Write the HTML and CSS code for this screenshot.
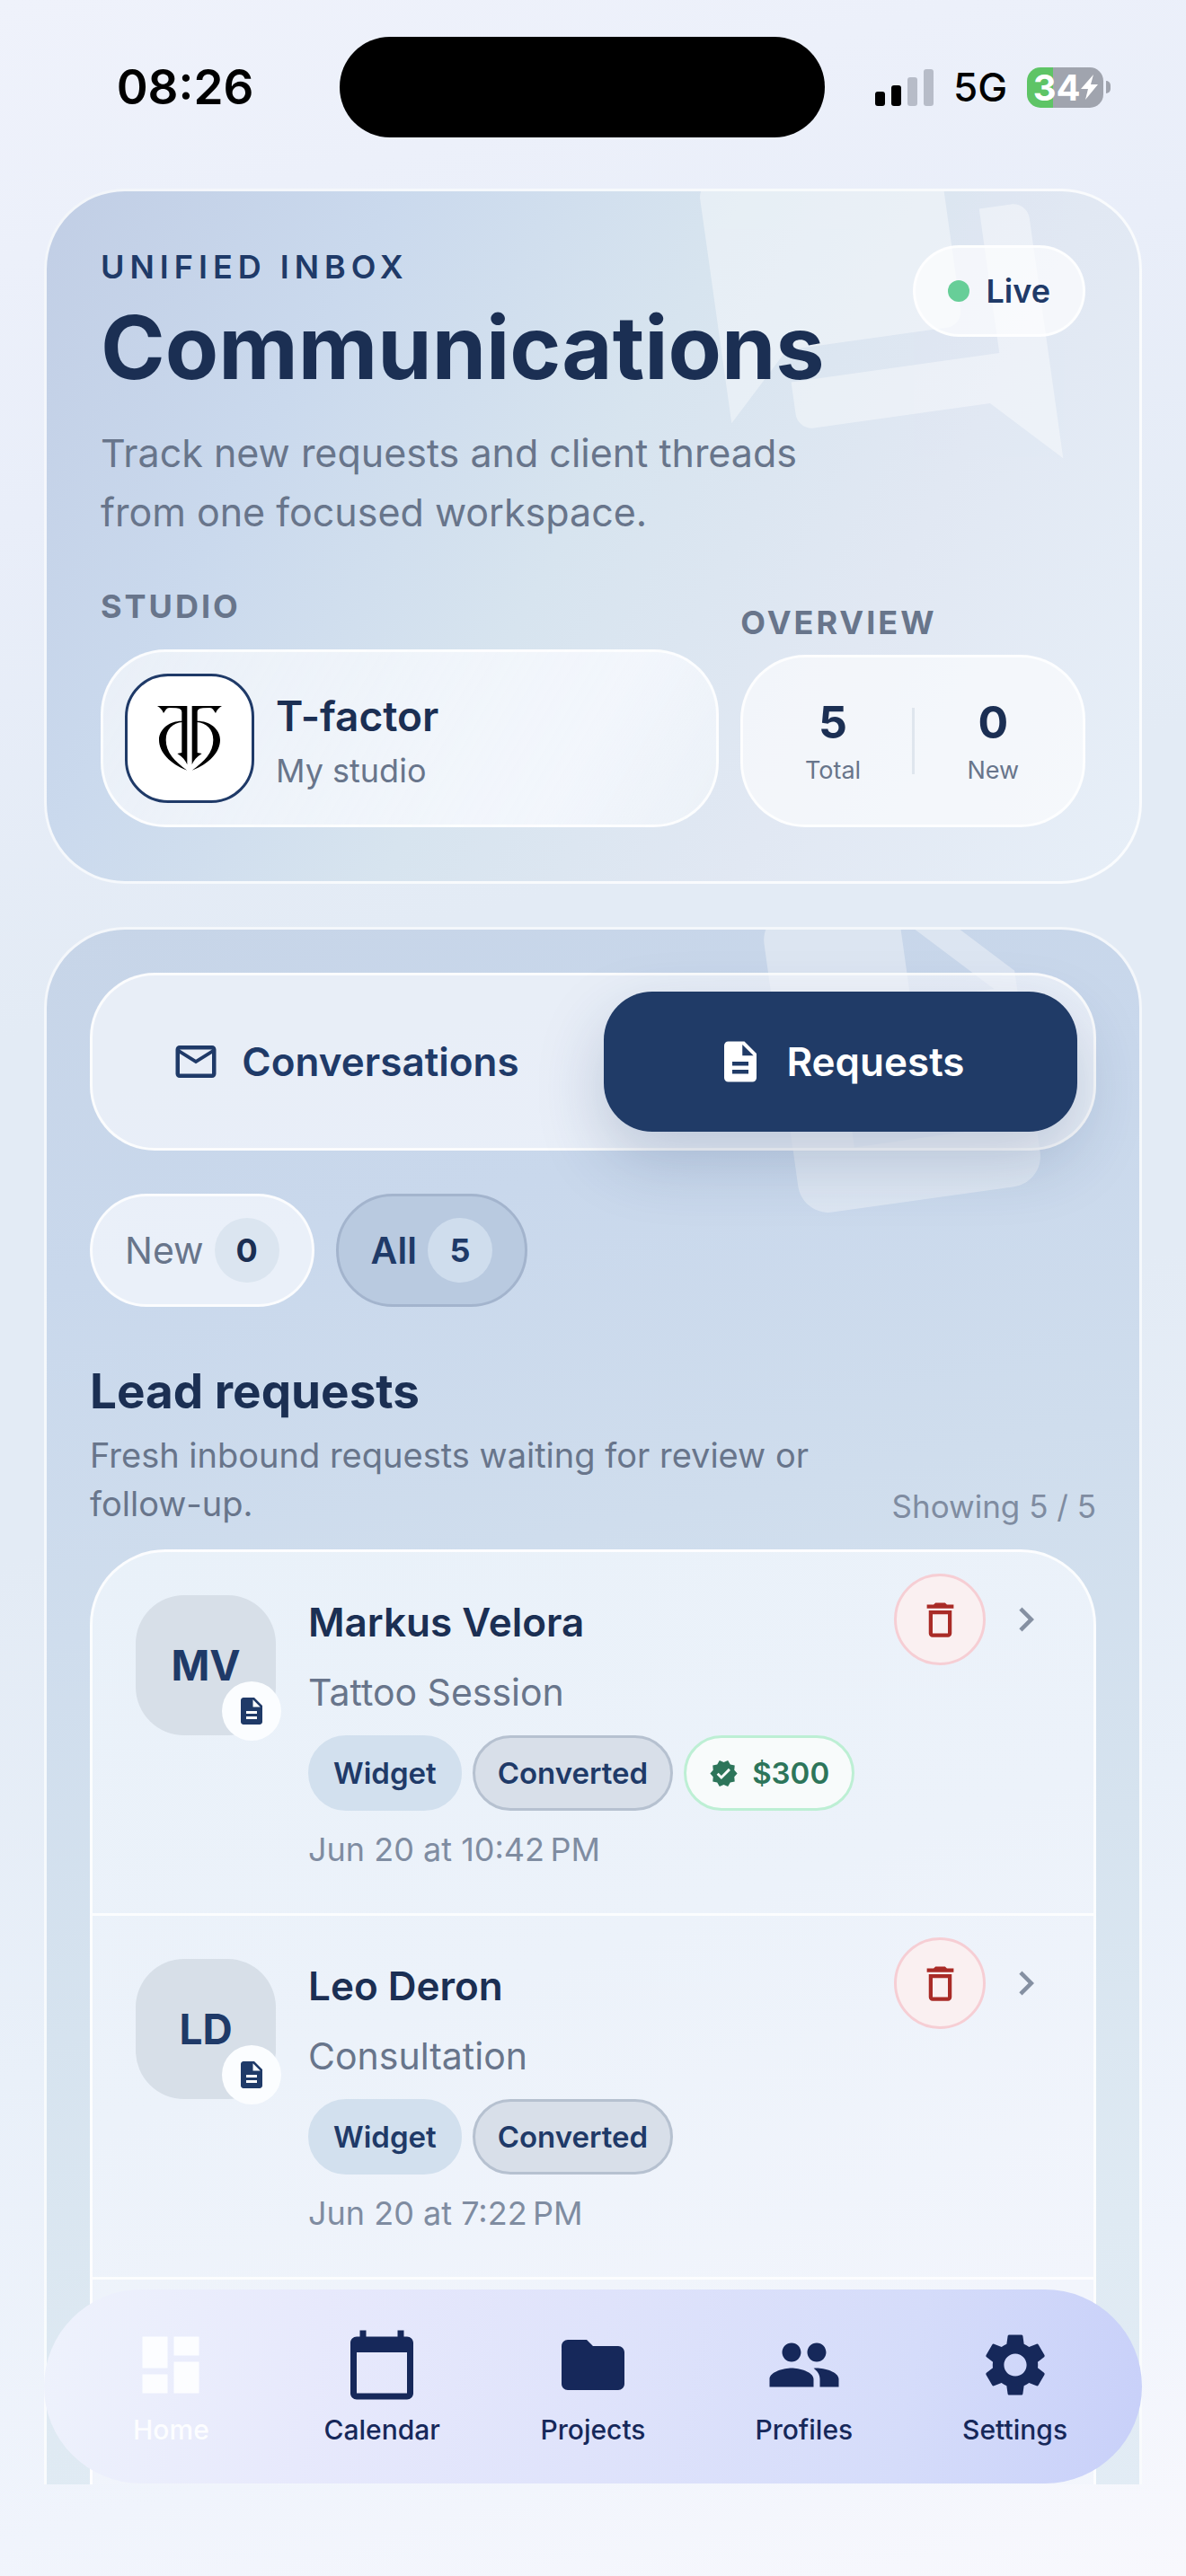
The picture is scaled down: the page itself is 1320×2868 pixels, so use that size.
FILE: index.html
```html
<!DOCTYPE html>
<html lang="en">
<head>
<meta charset="utf-8">
<meta name="viewport" content="width=device-width, initial-scale=1">
<title>Communications</title>
<link rel="stylesheet" href="styles.css">
</head>
<body>
<svg class="sprite" aria-hidden="true">
  <symbol id="doc" viewBox="0 0 24 24"><path d="M14 2H6c-1.1 0-1.99.9-1.99 2L4 20c0 1.1.89 2 1.99 2H18c1.1 0 2-.9 2-2V8l-6-6zm2 16H8v-2h8v2zm0-4H8v-2h8v2zm-3-5V3.5L18.5 9H13z"/></symbol>
  <symbol id="forum" viewBox="0 0 24 24"><path d="M21 6h-2v9H6v2c0 .55.45 1 1 1h11l4 4V7c0-.55-.45-1-1-1zm-4 6V3c0-.55-.45-1-1-1H3c-.55 0-1 .45-1 1v14l4-4h10c.55 0 1-.45 1-1z"/></symbol>
  <symbol id="mail" viewBox="0 0 24 24"><path d="M22 6c0-1.1-.9-2-2-2H4c-1.1 0-2 .9-2 2v12c0 1.1.9 2 2 2h16c1.100 0 2-.9 2-2V6zm-2 0l-8 5-8-5h16zm0 12H4V8l8 5 8-5v10z"/></symbol>
  <symbol id="trash" viewBox="0 0 24 24"><path d="M6 19c0 1.1.9 2 2 2h8c1.100 0 2-.9 2-2V7H6v12zM8 9h8v10H8V9zm7.500-5l-1-1h-5l-1 1H5v2h14V4z"/></symbol>
  <symbol id="chevron" viewBox="0 0 24 24"><path d="M10 6L8.590 7.410 13.170 12l-4.580 4.590L10 18l6-6z"/></symbol>
  <symbol id="verified" viewBox="0 0 24 24"><path d="M23 12l-2.440-2.790.34-3.690-3.610-.82-1.890-3.200L12 2.960 8.600 1.500 6.710 4.690 3.100 5.500l.34 3.700L1 12l2.440 2.790-.34 3.700 3.610.82L8.600 22.500l3.400-1.470 3.400 1.460 1.890-3.190 3.610-.82-.34-3.690L23 12zm-12.910 4.720l-3.800-3.810 1.480-1.480 2.320 2.330 5.850-5.870 1.480 1.480-7.330 7.350z"/></symbol>
</svg>

<div class="screen">
  <header class="status">
    <time class="clock">08:26</time>
    <div class="island"></div>
    <div class="signals">
      <svg class="bars" viewBox="0 0 65 41" aria-label="Signal">
        <rect x="0" y="25" width="11" height="16" rx="3"/>
        <rect x="18" y="18" width="11" height="23" rx="3"/>
        <rect class="off" x="36" y="9" width="11" height="32" rx="3"/>
        <rect class="off" x="54" y="0" width="11" height="41" rx="3"/>
      </svg>
      <span class="network">5G</span>
      <span class="battery">34<svg class="bolt" viewBox="0 0 19 30" aria-hidden="true"><path d="M14 1L0 17h8L5 29 19 12h-8z"/></svg></span>
    </div>
  </header>

  <div class="viewport">
    <main class="content">
      <section class="card hero">
        <svg class="watermark watermark-forum" aria-hidden="true"><use href="#forum"/></svg>
        <div class="hero-top">
          <div class="hero-text">
            <p class="eyebrow">UNIFIED INBOX</p>
            <h1>Communications</h1>
            <p class="lead">Track new requests and client threads from one focused workspace.</p>
          </div>
          <span class="live">Live</span>
        </div>
        <div class="hero-bottom">
          <div class="studio">
            <h2 class="label">STUDIO</h2>
            <button class="studio-card" type="button">
              <svg class="logo" viewBox="63 69 414 414" aria-hidden="true">
                <g id="half">
                  <path d="M162 168H262V364C257 350 246 338 229 327L244 324V190C244 180 238 176 225 175L202 174C193 175 190 182 183 192C178 180 172 174 162 168Z"/>
                  <path d="M246 218C206 217 168 243 168 281C168 322 204 360 262 383C220 352 191 323 191 281C191 246 214 224 246 222Z"/>
                </g>
                <use href="#half" transform="matrix(-1 0 0 1 540 0)"/>
              </svg>
              <span class="studio-text">
                <strong>T-factor</strong>
                <span>My studio</span>
              </span>
            </button>
          </div>
          <div class="overview">
            <h2 class="label">OVERVIEW</h2>
            <dl class="stats">
              <div><dt>Total</dt><dd>5</dd></div>
              <div><dt>New</dt><dd>0</dd></div>
            </dl>
          </div>
        </div>
      </section>

      <section class="card panel">
        <svg class="watermark watermark-doc" aria-hidden="true"><use href="#doc"/></svg>
        <div class="tabs">
          <button class="tab" type="button"><svg class="icon"><use href="#mail"/></svg>Conversations</button>
          <button class="tab active" type="button"><svg class="icon"><use href="#doc"/></svg>Requests</button>
        </div>
        <div class="filters">
          <button class="filter" type="button">New <span class="count">0</span></button>
          <button class="filter selected" type="button">All <span class="count">5</span></button>
        </div>
        <div class="list-head">
          <div>
            <h2>Lead requests</h2>
            <p>Fresh inbound requests waiting for review or follow-up.</p>
          </div>
          <span class="showing">Showing 5 / 5</span>
        </div>
        <ul class="list">
          <li class="row">
            <div class="avatar">MV<span class="badge"><svg><use href="#doc"/></svg></span></div>
            <div class="details">
              <h3>Markus Velora</h3>
              <p class="kind">Tattoo Session</p>
              <div class="tags">
                <span class="tag">Widget</span>
                <span class="tag converted">Converted</span>
                <span class="tag paid"><svg><use href="#verified"/></svg>$300</span>
              </div>
              <time class="when">Jun 20 at 10:42&#8239;PM</time>
            </div>
            <div class="actions">
              <button class="delete" type="button" aria-label="Delete"><svg><use href="#trash"/></svg></button>
              <svg class="chevron" aria-hidden="true"><use href="#chevron"/></svg>
            </div>
          </li>
          <li class="row">
            <div class="avatar">LD<span class="badge"><svg><use href="#doc"/></svg></span></div>
            <div class="details">
              <h3>Leo Deron</h3>
              <p class="kind">Consultation</p>
              <div class="tags">
                <span class="tag">Widget</span>
                <span class="tag converted">Converted</span>
              </div>
              <time class="when">Jun 20 at 7:22&#8239;PM</time>
            </div>
            <div class="actions">
              <button class="delete" type="button" aria-label="Delete"><svg><use href="#trash"/></svg></button>
              <svg class="chevron" aria-hidden="true"><use href="#chevron"/></svg>
            </div>
          </li>
          <li class="row placeholder"></li>
        </ul>
      </section>
    </main>

    <nav class="tabbar">
      <a class="current" href="#home"><svg viewBox="0 0 24 24"><path d="M3 13h8V3H3v10zm0 8h8v-6H3v6zm10 0h8V11h-8v10zm0-18v6h8V3h-8z"/></svg>Home</a>
      <a href="#calendar"><svg viewBox="0 0 24 24"><path d="M20 3h-1V1h-2v2H7V1H5v2H4c-1.100 0-2 .9-2 2v16c0 1.100.9 2 2 2h16c1.100 0 2-.9 2-2V5c0-1.100-.9-2-2-2zm0 18H4V8h16v13z"/></svg>Calendar</a>
      <a href="#projects"><svg viewBox="0 0 24 24"><path d="M10 4H4c-1.100 0-1.990.9-1.990 2L2 18c0 1.100.9 2 2 2h16c1.100 0 2-.9 2-2V8c0-1.100-.9-2-2-2h-8l-2-2z"/></svg>Projects</a>
      <a href="#profiles"><svg viewBox="0 0 24 24"><path d="M16 11c1.660 0 2.990-1.340 2.990-3S17.660 5 16 5s-3 1.340-3 3 1.340 3 3 3zm-8 0c1.660 0 2.990-1.340 2.990-3S9.660 5 8 5 5 6.340 5 8s1.340 3 3 3zm0 2c-2.330 0-7 1.170-7 3.500V19h14v-2.500c0-2.330-4.670-3.500-7-3.500zm8 0c-.29 0-.62.02-.97.05 1.160.84 1.970 1.970 1.970 3.450V19h6v-2.500c0-2.330-4.670-3.500-7-3.500z"/></svg>Profiles</a>
      <a href="#settings"><svg viewBox="0 0 24 24"><path d="M19.140 12.940c.04-.3.06-.61.06-.94 0-.32-.02-.64-.07-.94l2.030-1.580c.18-.14.23-.41.12-.61l-1.920-3.320c-.12-.22-.37-.29-.59-.22l-2.390.96c-.5-.38-1.030-.7-1.620-.94l-.36-2.540c-.04-.24-.24-.41-.48-.41h-3.840c-.24 0-.43.17-.47.41l-.36 2.540c-.59.24-1.130.57-1.620.94l-2.390-.96c-.22-.08-.47 0-.59.22L2.740 8.870c-.12.21-.08.47.12.61l2.030 1.580c-.05.3-.09.63-.09.94s.02.64.07.94l-2.030 1.580c-.18.14-.23.41-.12.61l1.920 3.320c.12.22.37.29.59.22l2.390-.96c.5.38 1.030.7 1.620.94l.36 2.540c.05.24.24.41.48.41h3.840c.24 0 .44-.17.47-.41l.36-2.540c.59-.24 1.130-.56 1.620-.94l2.390.96c.22.08.47 0 .59-.22l1.920-3.320c.12-.22.07-.47-.12-.61l-2.010-1.580zM12 15.600c-1.980 0-3.600-1.620-3.600-3.600s1.620-3.600 3.600-3.600 3.600 1.620 3.600 3.600-1.620 3.600-3.600 3.600z"/></svg>Settings</a>
    </nav>
  </div>
</div>
</body>
</html>
```
FILE: styles.css
```css
:root {
  --ink: #1b2f53;
  --navy: #1f3a68;
  --grey: #68758b;
  --grey-light: #7f8ca1;
  --line: rgba(255, 255, 255, 0.8);
}

* {
  box-sizing: border-box;
}

body {
  margin: 0;
  font-family: Inter, "Liberation Sans", sans-serif;
  color: var(--ink);
}

h1, h2, h3, p, ul, dl, dd {
  margin: 0;
  padding: 0;
}

button {
  font: inherit;
  color: inherit;
  cursor: pointer;
}

svg {
  display: block;
  fill: currentColor;
}

.sprite {
  display: none;
}

.screen {
  display: flex;
  flex-direction: column;
  height: 100vh;
  padding-bottom: 102px;
  background: linear-gradient(165deg, #eff2fb 0%, #e9eef9 18%, #e3ebf5 36%, #e3ebf5 54%, #e9f0f9 72%, #f0f4fc 88%, #f8f8fd 100%);
}

/* Status bar */

.status {
  display: grid;
  grid-template-columns: 1fr 540px 1fr;
  align-items: center;
  padding: 41px 24px 57px 0;
  color: #000;
}

.clock {
  padding-left: 34px;
  text-align: center;
  font-size: 53px;
  font-weight: 600;
}

.island {
  height: 112px;
  border-radius: 56px;
  background: #000;
}

.signals {
  display: flex;
  align-items: center;
  gap: 22px;
  padding-left: 56px;
}

.bars {
  width: 65px;
  height: 41px;
}

.bars .off {
  fill: #b7bcc8;
}

.network {
  font-size: 44px;
  font-weight: 500;
}

.battery {
  position: relative;
  display: flex;
  align-items: center;
  justify-content: center;
  width: 85px;
  height: 45px;
  border-radius: 15px;
  background: linear-gradient(90deg, #5ec466 34%, #a0a4ae 34%);
  color: #fff;
  font-size: 40px;
  font-weight: 700;
}

.battery::after {
  content: "";
  position: absolute;
  right: -8px;
  width: 5px;
  height: 14px;
  border-radius: 0 5px 5px 0;
  background: #a0a4ae;
}

.bolt {
  width: 19px;
  height: 30px;
}

/* Scrolling area */

.viewport {
  position: relative;
  flex: 1;
  min-height: 0;
  overflow: hidden;
}

.content {
  display: flex;
  flex-direction: column;
  gap: 48px;
  padding: 0 49px;
}

.card {
  position: relative;
  overflow: hidden;
  border: 3px solid var(--line);
  border-radius: 90px;
  background-origin: border-box;
}

.watermark {
  position: absolute;
  top: -72px;
  color: #fff;
  transform: rotate(-8deg);
}

.watermark-forum {
  right: 72px;
  width: 432px;
  height: 432px;
  opacity: 0.4;
}

.watermark-doc {
  right: 60px;
  width: 408px;
  height: 408px;
  opacity: 0.36;
}

/* Hero */

.hero {
  padding: 60px;
  background-image: linear-gradient(118deg, #c1cee5 0%, #cad9ed 24%, #d7e4ef 48%, #e1e8f3 72%, #e7eff8 100%);
}

.hero-top {
  position: relative;
  display: flex;
  align-items: flex-start;
  justify-content: space-between;
  gap: 60px;
}

.eyebrow {
  font-size: 36px;
  font-weight: 600;
  line-height: 48px;
  letter-spacing: 6px;
  color: var(--navy);
}

h1 {
  margin-top: 6px;
  font-size: 97px;
  font-weight: 700;
  line-height: 120px;
}

.lead {
  margin-top: 24px;
  font-size: 43px;
  line-height: 66px;
  color: var(--grey);
}

.live {
  display: flex;
  align-items: center;
  gap: 18px;
  height: 102px;
  padding: 0 36px;
  border: 3px solid var(--line);
  border-radius: 51px;
  background: rgba(255, 255, 255, 0.65);
  font-size: 36px;
  font-weight: 600;
  color: var(--navy);
}

.live::before {
  content: "";
  width: 24px;
  height: 24px;
  border-radius: 50%;
  background: #67ce98;
}

.hero-bottom {
  position: relative;
  display: grid;
  grid-template-columns: 689fr 384fr;
  align-items: end;
  gap: 24px;
  margin-top: 48px;
}

.studio, .overview {
  display: flex;
  flex-direction: column;
  gap: 24px;
}

.overview {
  gap: 12px;
}

.label {
  font-size: 36px;
  font-weight: 700;
  line-height: 48px;
  letter-spacing: 3px;
  color: var(--grey);
}

.studio-card {
  display: flex;
  align-items: center;
  gap: 24px;
  padding: 24px;
  border: 3px solid var(--line);
  border-radius: 72px;
  background: linear-gradient(120deg, rgba(255, 255, 255, 0.6), rgba(248, 250, 255, 0.8) 75%, rgba(244, 248, 251, 0.6));
  text-align: left;
}

.logo {
  width: 144px;
  height: 144px;
  border: 3px solid var(--navy);
  border-radius: 48px;
  background: #fff;
  fill: #000;
}

.studio-text {
  display: flex;
  flex-direction: column;
  gap: 4px;
  padding-top: 8px;
}

.studio-text strong {
  font-size: 46px;
  font-weight: 600;
  line-height: 60px;
}

.studio-text span {
  font-size: 36px;
  line-height: 54px;
  color: var(--grey);
}

.stats {
  display: flex;
  align-items: center;
  height: 192px;
  padding: 0 12px;
  border: 3px solid var(--line);
  border-radius: 72px;
  background: rgba(255, 255, 255, 0.6);
}

.stats div {
  display: flex;
  flex: 1;
  flex-direction: column-reverse;
  justify-content: center;
  gap: 6px;
  height: 74px;
  text-align: center;
}

.stats div + div {
  border-left: 3px solid #dfe6ee;
}

.stats dd {
  font-size: 50px;
  font-weight: 700;
  line-height: 60px;
}

.stats dt {
  font-size: 27px;
  line-height: 36px;
  color: var(--grey);
}

/* Requests panel */

.panel {
  padding: 48px;
  background-image: linear-gradient(168deg, #c7d5e8 0%, #c9d8ec 18%, #cfdded 36%, #d6e3ef 56%, #dfeaf3 76%, #e4edf6 100%);
}

.tabs {
  position: relative;
  display: grid;
  grid-template-columns: 1fr 1fr;
  gap: 24px;
  padding: 18px;
  border: 3px solid var(--line);
  border-radius: 72px;
  background: rgba(247, 249, 253, 0.68);
}

.tab {
  display: flex;
  align-items: center;
  justify-content: center;
  gap: 24px;
  height: 156px;
  border: 0;
  border-radius: 54px;
  background: none;
  font-size: 44px;
  font-weight: 600;
  color: var(--navy);
}

.tab.active {
  background: #203b67;
  box-shadow: 0 30px 75px rgba(31, 58, 104, 0.22);
  color: #fff;
}

.icon {
  width: 54px;
  height: 54px;
}

.filters {
  position: relative;
  display: flex;
  gap: 24px;
  margin-top: 48px;
}

.filter {
  display: flex;
  align-items: center;
  gap: 12px;
  height: 126px;
  padding: 0 36px;
  border: 3px solid var(--line);
  border-radius: 63px;
  background: rgba(249, 251, 255, 0.68);
  font-size: 41px;
  color: var(--grey);
}

.filter.selected {
  border-color: #a3b4cd;
  background: #b9cae0;
  font-weight: 600;
  color: var(--navy);
}

.count {
  width: 72px;
  border-radius: 50%;
  background: #dbe5f0;
  font-size: 36px;
  font-weight: 700;
  line-height: 72px;
  text-align: center;
  color: var(--ink);
}

.selected .count {
  background: #cfdded;
  color: var(--navy);
}

.list-head {
  display: flex;
  align-items: flex-end;
  justify-content: space-between;
  gap: 24px;
  margin-top: 60px;
}

.list-head h2 {
  font-size: 53px;
  font-weight: 700;
  line-height: 68px;
}

.list-head p {
  margin-top: 10px;
  font-size: 38px;
  line-height: 54px;
  color: var(--grey);
}

.showing {
  flex: none;
  font-size: 35px;
  line-height: 48px;
  color: var(--grey-light);
}

.list {
  margin-top: 24px;
  border: 3px solid var(--line);
  border-radius: 84px;
  background: linear-gradient(160deg, #e9f1f9 0%, #ecf2fa 40%, #f2f5fc 75%, #f3f6fc 100%);
  list-style: none;
}

.row {
  display: flex;
  align-items: flex-start;
  padding: 24px 48px 48px;
}

.row + .row {
  border-top: 3px solid var(--line);
}

.placeholder {
  height: 402px;
}

.avatar {
  position: relative;
  flex: none;
  width: 156px;
  height: 156px;
  margin-top: 24px;
  border-radius: 54px;
  background: #d7dfe8;
  font-size: 46px;
  font-weight: 700;
  line-height: 156px;
  text-align: center;
  color: var(--navy);
}

.badge {
  position: absolute;
  right: -6px;
  bottom: -6px;
  display: grid;
  place-items: center;
  width: 66px;
  height: 66px;
  border-radius: 50%;
  background: #fbfdff;
}

.badge svg {
  width: 36px;
  height: 36px;
}

.details {
  display: flex;
  flex: 1;
  flex-direction: column;
  gap: 21px;
  padding: 24px 0 0 36px;
}

h3 {
  font-size: 44px;
  font-weight: 600;
  line-height: 60px;
}

.kind {
  font-size: 41px;
  line-height: 54px;
  color: var(--grey);
}

.tags {
  display: flex;
  gap: 12px;
}

.tag {
  display: flex;
  align-items: center;
  gap: 15px;
  height: 84px;
  padding: 0 25px;
  border: 3px solid #d2e0ee;
  border-radius: 42px;
  background: #d2e0ee;
  font-size: 33px;
  font-weight: 600;
  color: var(--navy);
}

.tag.converted {
  border-color: #b6c1d0;
  background: #d8dfe9;
}

.tag.paid {
  border-color: #bdefd4;
  background: #f8fbfb;
  color: #2d755a;
}

.paid svg {
  width: 33px;
  height: 33px;
}

.when {
  font-size: 36px;
  line-height: 45px;
  color: var(--grey-light);
}

.actions {
  display: flex;
  flex: none;
  align-items: center;
  gap: 18px;
}

.delete {
  display: grid;
  place-items: center;
  width: 102px;
  height: 102px;
  padding: 0;
  border: 3px solid #f6ced4;
  border-radius: 50%;
  background: #faf0f1;
  color: #a92b27;
}

.delete svg {
  width: 51px;
  height: 51px;
}

.chevron {
  width: 54px;
  height: 54px;
  color: #8590a2;
}

/* Bottom navigation */

.tabbar {
  position: absolute;
  right: 49px;
  bottom: 1px;
  left: 49px;
  display: grid;
  grid-template-columns: repeat(5, 1fr);
  align-items: center;
  height: 216px;
  padding: 0 24px;
  border-radius: 108px;
  background: linear-gradient(100deg, #eef2fc 0%, #e7e9fc 25%, #dfe3fb 50%, #d5dcfa 78%, #c8d0f9 100%);
}

.tabbar a {
  display: flex;
  flex-direction: column;
  align-items: center;
  gap: 12px;
  font-size: 30px;
  font-weight: 500;
  line-height: 36px;
  text-decoration: none;
  color: #16285a;
}

.tabbar a.current {
  color: #fcfdff;
}

.tabbar svg {
  width: 84px;
  height: 84px;
}
```
